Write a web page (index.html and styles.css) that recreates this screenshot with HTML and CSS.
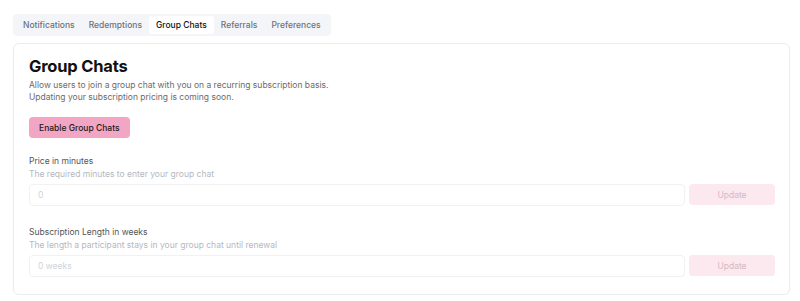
FILE: index.html
```html
<!DOCTYPE html>
<html>
	<head>
		<title>Group Chats</title>
		<link rel="stylesheet" href="styles.css">
	</head>
	<body>

		<div class="tabs">
			<div class="tab">Notifications</div>
			<div class="tab">Redemptions</div>
			<div class="tab tab-active">Group Chats</div>
			<div class="tab">Referrals</div>
			<div class="tab">Preferences</div>
		</div>

		<div class="card">
			<h1>Group Chats</h1>
			<p class="lead">Allow users to join a group chat with you on a recurring subscription basis.<br>Updating your subscription pricing is coming soon.</p>

			<button type="button" class="btn-enable">Enable Group Chats</button>

			<div class="field">
				<label>Price in minutes</label>
				<div class="hint">The required minutes to enter your group chat</div>
				<div class="row">
					<input type="text" placeholder="0" disabled>
					<button type="button" class="btn-update" disabled>Update</button>
				</div>
			</div>

			<div class="field">
				<label>Subscription Length in weeks</label>
				<div class="hint">The length a participant stays in your group chat until renewal</div>
				<div class="row">
					<input type="text" placeholder="0 weeks" disabled>
					<button type="button" class="btn-update" disabled>Update</button>
				</div>
			</div>
		</div>

	</body>
</html>
```

FILE: styles.css
```css
body {
	font-family: Inter, "Noto Sans", sans-serif;
	margin: 0;
	padding: 12px 10px 0 13px;
	color: #111;
	background: #fff;
}
.tabs {
	display: inline-flex;
	align-items: center;
	background: #f3f5f8;
	border-radius: 4px;
	padding: 2px 3px;
	height: 18px;
}
.tab {
	font-size: 8.5px;
	font-weight: 500;
	color: #6b7280;
	padding: 0 7px;
	line-height: 18px;
	border-radius: 3px;
}
.tab-active {
	background: #fff;
	color: #111;
}
.card {
	margin-top: 7px;
	border: 1px solid #ececec;
	border-radius: 6px;
	padding: 12px 14px 17px 15px;
	box-shadow: 0 1px 2px rgba(0,0,0,0.03);
}
h1 {
	font-size: 16.5px;
	font-weight: 700;
	margin: 0;
	line-height: 20px;
	letter-spacing: -0.2px;
}
.lead {
	font-size: 8.5px;
	color: #6b6b6b;
	line-height: 12px;
	margin: 3px 0 0;
}
.btn-enable {
	font-family: inherit;
	font-size: 8.5px;
	font-weight: 500;
	color: #1a1a1a;
	background: #f3a6c3;
	border: 0;
	border-radius: 4px;
	height: 21px;
	padding: 0 10px;
	margin-top: 14px;
	display: block;
}
.field { margin-top: 17px; }
.field + .field { margin-top: 20px; }
.field label {
	display: block;
	font-size: 8.5px;
	color: #555;
	line-height: 12px;
}
.hint {
	font-size: 8.5px;
	color: #b4b8bf;
	line-height: 12px;
	margin-top: 1px;
}
.row {
	display: flex;
	gap: 4px;
	margin-top: 4px;
}
.row input {
	flex: 1;
	font-family: inherit;
	font-size: 8.5px;
	height: 22px;
	box-sizing: border-box;
	border: 1px solid #f1f1f1;
	border-radius: 4px;
	background: #fff;
	padding: 0 8px;
}
.row input::placeholder { color: #d0d3d8; }
.btn-update {
	font-family: inherit;
	font-size: 8.5px;
	color: #d6b9c4;
	background: #fce8ef;
	border: 0;
	border-radius: 4px;
	width: 86px;
	height: 21px;
}
```
